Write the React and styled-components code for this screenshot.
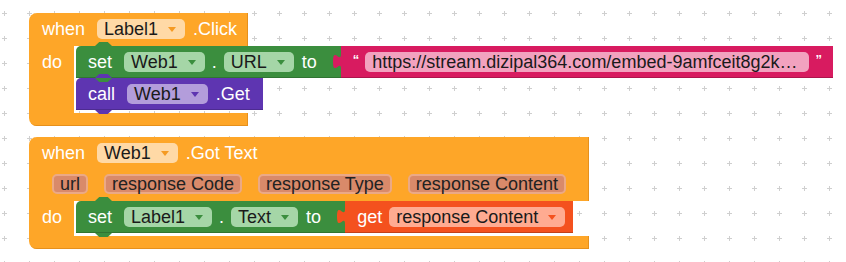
import React from 'react';
import styled, { createGlobalStyle } from 'styled-components';

const ORANGE = '#fea628';
const GREEN = '#3b8e3e';
const PURPLE = '#5e35b1';
const PINK = '#d81b60';
const RED = '#f4511e';

const GlobalStyle = createGlobalStyle`
  html, body {
    margin: 0;
    padding: 0;
    background: #fff;
  }
  body {
    font-family: "Liberation Sans", Arial, sans-serif;
  }
`;

const Workspace = styled.div`
  position: relative;
  width: 846px;
  height: 262px;
  overflow: hidden;
  background: #fff;
`;

const Grid = styled.svg`
  position: absolute;
  left: 0;
  top: 0;
  width: 100%;
  height: 100%;
`;

const Canvas = styled.div`
  position: relative;
  display: flex;
  flex-direction: column;
  align-items: flex-start;
  gap: 11px;
  padding: 13px 0 0 29px;
`;

const EventBlock = styled.div`
  display: flex;
  flex-direction: column;
  width: ${(p) => p.$width}px;
`;

const Header = styled.div`
  display: flex;
  flex-direction: column;
  gap: 11px;
  padding: 6px 0 7px 13px;
  background: ${ORANGE};
  border-top-left-radius: 8px;
  box-shadow: inset -1px 0 0 #e6901c;
`;

const Row = styled.div`
  display: flex;
  align-items: center;
  gap: 8px;
  height: 20px;
`;

const ParamRow = styled(Row)`
  gap: 16px;
  padding-left: 10px;
`;

const Label = styled.span`
  color: #fff;
  font-size: 18px;
  line-height: 20px;
  white-space: nowrap;
`;

const Keyword = styled(Label)`
  margin-right: 4px;
`;

const Dot = styled(Label)`
  margin: 0 -1px;
`;

const Body = styled.div`
  display: flex;
`;

const Arm = styled.div`
  flex: 0 0 auto;
  width: 32px;
  margin-right: 2px;
  padding-left: 13px;
  background: ${ORANGE};

  ${Label} {
    display: block;
    line-height: 32px;
  }
`;

const Stack = styled.div`
  flex: 0 0 auto;
  display: flex;
  flex-direction: column;
  align-items: flex-start;
  padding-bottom: 3px;
`;

const Footer = styled.div`
  height: 13px;
  background: ${ORANGE};
  border-bottom-left-radius: 8px;
  box-shadow: inset -1px -1px 0 #e6901c;
`;

const Line = styled.div`
  display: flex;
  align-items: flex-start;
`;

const Statement = styled.div`
  position: relative;
  display: flex;
  align-items: center;
  gap: 8px;
  height: 32px;
  padding: 0 ${(p) => p.$end}px 0 12px;
  background: ${(p) => p.$color};
  border-top-left-radius: 5px;
  box-shadow: inset 0 -1px 0 rgba(0, 0, 0, 0.18);

  &::before,
  &::after {
    content: '';
    position: absolute;
    left: 19px;
    width: 17px;
    height: 4px;
    background: ${(p) => p.$color};
  }
  &::before {
    top: -4px;
    z-index: 1;
    clip-path: polygon(0 100%, 25% 0, 75% 0, 100% 100%);
  }
  &::after {
    bottom: -4px;
    z-index: 2;
    clip-path: polygon(0 0, 100% 0, 75% 100%, 25% 100%);
  }
`;

const Value = styled.div`
  position: relative;
  display: flex;
  align-items: center;
  gap: ${(p) => p.$gap}px;
  height: 32px;
  padding: 0 ${(p) => p.$end}px 0 12px;
  background: ${(p) => p.$color};
  box-shadow: inset 0 -1px 0 rgba(0, 0, 0, 0.2);
`;

const TabSvg = styled.svg`
  position: absolute;
  left: -8px;
  top: 6px;
  width: 9px;
  height: 19px;
`;

const Field = styled.span`
  display: inline-flex;
  align-items: center;
  gap: 10px;
  height: 20px;
  padding: 0 9px 0 7px;
  border-radius: 5px;
  background: ${(p) => p.$bg};
  color: #1a1a1a;
  font-size: 18px;
  line-height: 20px;
  white-space: nowrap;
`;

const Arrow = styled.span`
  width: 0;
  height: 0;
  margin-top: 1px;
  border-left: 4px solid transparent;
  border-right: 4px solid transparent;
  border-top: 5px solid ${(p) => p.$color};
`;

const Param = styled.span`
  box-sizing: border-box;
  display: inline-flex;
  align-items: center;
  height: 20px;
  padding: 0 6px;
  border: 2px solid #eba986;
  border-radius: 5px;
  background: #d98a6a;
  color: #222;
  font-size: 18px;
  white-space: nowrap;
`;

const TextField = styled.span`
  display: inline-flex;
  align-items: center;
  height: 20px;
  padding: 0 12px 0 7px;
  border-radius: 5px;
  background: #f2a2bf;
  color: #1a1a1a;
  font-size: 18px;
  white-space: nowrap;
`;

const Quote = styled.span`
  align-self: flex-start;
  margin-top: 7px;
  color: #fff;
  font-size: 13px;
  font-weight: bold;
  line-height: 1;
`;

const Dropdown = ({ bg, arrow, children }) => (
  <Field $bg={bg}>
    {children}
    <Arrow $color={arrow} />
  </Field>
);

const Tab = ({ color }) => (
  <TabSvg viewBox="0 -0.5 9 16">
    <path d="M9 0 H8 C8 10 0 -8 0 7.5 C0 23 8 5 8 15 H9 Z" fill={color} />
  </TabSvg>
);

const greenField = { bg: '#a5d6a7', arrow: GREEN };
const orangeField = { bg: '#ffd9a6', arrow: '#f59a22' };

export default function App() {
  return (
    <>
      <GlobalStyle />
      <Workspace>
        <Grid>
          <defs>
            <pattern id="dots" width="25" height="25" patternUnits="userSpaceOnUse" x="-8" y="1">
              <path d="M10 12.5H15M12.5 10V15" stroke="#cfcfcf" strokeWidth="1" />
            </pattern>
          </defs>
          <rect width="100%" height="100%" fill="url(#dots)" />
        </Grid>
        <Canvas>
          <EventBlock $width={219}>
            <Header>
              <Row>
                <Keyword>when</Keyword>
                <Dropdown {...orangeField}>Label1</Dropdown>
                <Label>.Click</Label>
              </Row>
            </Header>
            <Body>
              <Arm>
                <Label>do</Label>
              </Arm>
              <Stack>
                <Line>
                  <Statement $color={GREEN} $end={24}>
                    <Keyword>set</Keyword>
                    <Dropdown {...greenField}>Web1</Dropdown>
                    <Dot>.</Dot>
                    <Dropdown {...greenField}>URL</Dropdown>
                    <Label>to</Label>
                  </Statement>
                  <Value $color={PINK} $gap={6} $end={11}>
                    <Tab color={PINK} />
                    <Quote>“</Quote>
                    <TextField>https://stream.dizipal364.com/embed-9amfceit8g2k…</TextField>
                    <Quote>”</Quote>
                  </Value>
                </Line>
                <Statement $color={PURPLE} $end={13}>
                  <Keyword>call</Keyword>
                  <Dropdown bg="#b39ddb" arrow={PURPLE}>Web1</Dropdown>
                  <Label>.Get</Label>
                </Statement>
              </Stack>
            </Body>
            <Footer />
          </EventBlock>

          <EventBlock $width={560}>
            <Header>
              <Row>
                <Keyword>when</Keyword>
                <Dropdown {...orangeField}>Web1</Dropdown>
                <Label>.Got Text</Label>
              </Row>
              <ParamRow>
                <Param>url</Param>
                <Param>response Code</Param>
                <Param>response Type</Param>
                <Param>response Content</Param>
              </ParamRow>
            </Header>
            <Body>
              <Arm>
                <Label>do</Label>
              </Arm>
              <Stack>
                <Line>
                  <Statement $color={GREEN} $end={24}>
                    <Keyword>set</Keyword>
                    <Dropdown {...greenField}>Label1</Dropdown>
                    <Dot>.</Dot>
                    <Dropdown {...greenField}>Text</Dropdown>
                    <Label>to</Label>
                  </Statement>
                  <Value $color={RED} $gap={7} $end={8}>
                    <Tab color={RED} />
                    <Label>get</Label>
                    <Dropdown bg="#ffab91" arrow={RED}>response Content</Dropdown>
                  </Value>
                </Line>
              </Stack>
            </Body>
            <Footer />
          </EventBlock>
        </Canvas>
      </Workspace>
    </>
  );
}
